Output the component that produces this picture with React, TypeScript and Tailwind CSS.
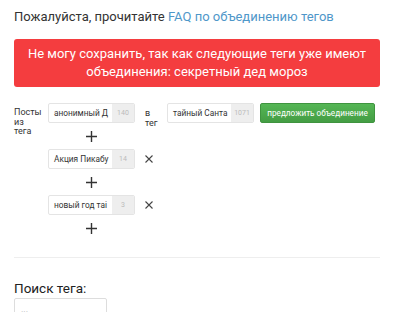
// Tag merge form: source tags on the left get merged into one target tag.
const SOURCES = [
  { name: "анонимный Д", count: "140", removable: false },
  { name: "Акция Пикабу", count: "14", removable: true },
  { name: "новый год таі", count: "3", removable: true },
];

function TagInput({ name, count }: { name: string; count: string }) {
  return (
    <div className="flex h-[20px] w-[87px] border border-[#e4e4e4] rounded-[2px] overflow-hidden bg-white">
      <div className="flex-1 min-w-0 pl-[5px] flex items-center text-[8.3px] text-[#333] whitespace-nowrap overflow-hidden">
        {name}
      </div>
      <div className="w-[22px] flex-shrink-0 bg-[#eeeeee] flex items-center justify-center text-[7px] text-[#bbb]">
        {count}
      </div>
    </div>
  );
}

function Plus() {
  return (
    <div className="w-[87px] h-[26px] flex items-center justify-center">
      <svg width="11" height="11" viewBox="0 0 11 11" stroke="#333" strokeWidth="1.4">
        <path d="M5.5 0v11M0 5.5h11" />
      </svg>
    </div>
  );
}

function Cross() {
  return (
    <svg className="ml-[10px]" width="8" height="8" viewBox="0 0 8 8" stroke="#444" strokeWidth="1.1">
      <path d="M0.5 0.5l7 7M7.5 0.5l-7 7" />
    </svg>
  );
}

export default function App() {
  return (
    <div className="w-[400px] h-[312px] overflow-hidden bg-white px-[14px] pt-[7px] font-['Roboto',sans-serif] text-[#333]">
      <p className="text-[13px] leading-[20px] whitespace-nowrap">
        Пожалуйста, прочитайте <span className="text-[#4f97c9]">FAQ по объединению тегов</span>
      </p>

      <div className="mt-[12px] w-[366px] h-[48px] rounded-[3px] bg-[#f43d3f] text-white text-[13px] leading-[18px] text-center flex flex-col justify-center whitespace-nowrap">
        <div>Не могу сохранить, так как следующие теги уже имеют</div>
        <div>объединения: секретный дед мороз</div>
      </div>

      <div className="mt-[16px] flex">
        <div className="w-[34px] pt-[5px] text-[9px] leading-[9.5px] text-[#333]">
          Посты
          <br />
          из
          <br />
          тега
        </div>
        <div className="flex flex-col">
          <div className="flex items-start h-[20px]">
            <TagInput name={SOURCES[0].name} count={SOURCES[0].count} />
            <div className="ml-[10px] w-[22px] pt-[5px] text-[9px] leading-[10px]">
              в
              <br />
              тег
            </div>
            <TagInput name="тайный Санта" count="1071" />
            <button className="ml-[6px] h-[20px] w-[115px] rounded-[2px] bg-gradient-to-b from-[#55b655] to-[#449d44] border border-[#3f943f] text-white text-[8.2px] leading-none whitespace-nowrap">
              предложить объединение
            </button>
          </div>
          <Plus />
          {SOURCES.slice(1).map((s) => (
            <div key={s.name}>
              <div className="flex items-center">
                <TagInput name={s.name} count={s.count} />
                <Cross />
              </div>
              <Plus />
            </div>
          ))}
        </div>
      </div>

      <div className="mt-[16px] w-[366px] h-px bg-[#eeeeee]" />

      <h3 className="mt-[20px] text-[13.5px] leading-[20px] text-[#222]">Поиск тега:</h3>
      <div className="w-[93px] h-[24px] border border-[#ddd] rounded-[2px] pl-[6px] text-[9px] text-[#bbb] leading-[20px]">
        ...
      </div>
    </div>
  );
}
